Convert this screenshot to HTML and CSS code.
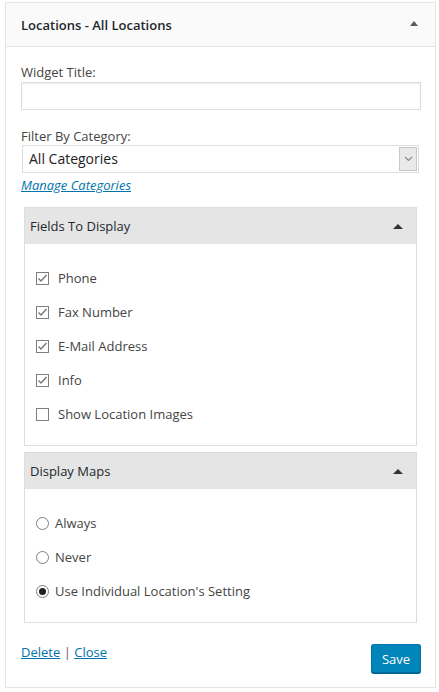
FILE: index.html
```html
<!DOCTYPE html>
<html>
<head>
<meta charset="utf-8">
<link rel="stylesheet" href="styles.css">
</head>
<body>
<div class="widget">
  <div class="widget-top">
    <h3 class="widget-title">Locations - All Locations</h3>
    <span class="tri tri-top"></span>
  </div>
  <div class="widget-inside">
    <label class="lbl">Widget Title:</label>
    <input class="text-input" type="text">
    <label class="lbl lbl-2">Filter By Category:</label>
    <div class="select">
      <span class="select-value">All Categories</span>
      <span class="select-arrow"><svg width="9" height="6" viewBox="0 0 9 6"><path d="M1 1 L4.5 4.5 L8 1" fill="none" stroke="#888" stroke-width="1.2"/></svg></span>
    </div>
    <a class="manage" href="#">Manage Categories</a>

    <div class="box">
      <div class="box-head"><span>Fields To Display</span><span class="tri"></span></div>
      <div class="box-body">
        <div class="row"><svg class="cb" width="13" height="13" viewBox="0 0 13 13"><rect x="0.5" y="0.5" width="12" height="12" fill="#fff" stroke="#7e7e7e"/><path d="M2.5 6.5 L5 9 L10.5 3" fill="none" stroke="#777" stroke-width="1.4"/></svg><span>Phone</span></div>
        <div class="row"><svg class="cb" width="13" height="13" viewBox="0 0 13 13"><rect x="0.5" y="0.5" width="12" height="12" fill="#fff" stroke="#7e7e7e"/><path d="M2.5 6.5 L5 9 L10.5 3" fill="none" stroke="#777" stroke-width="1.4"/></svg><span>Fax Number</span></div>
        <div class="row"><svg class="cb" width="13" height="13" viewBox="0 0 13 13"><rect x="0.5" y="0.5" width="12" height="12" fill="#fff" stroke="#7e7e7e"/><path d="M2.5 6.5 L5 9 L10.5 3" fill="none" stroke="#777" stroke-width="1.4"/></svg><span>E-Mail Address</span></div>
        <div class="row"><svg class="cb" width="13" height="13" viewBox="0 0 13 13"><rect x="0.5" y="0.5" width="12" height="12" fill="#fff" stroke="#7e7e7e"/><path d="M2.5 6.5 L5 9 L10.5 3" fill="none" stroke="#777" stroke-width="1.4"/></svg><span>Info</span></div>
        <div class="row"><svg class="cb" width="13" height="13" viewBox="0 0 13 13"><rect x="0.5" y="0.5" width="12" height="12" fill="#fff" stroke="#7e7e7e"/></svg><span>Show Location Images</span></div>
      </div>
    </div>

    <div class="box box-2">
      <div class="box-head"><span>Display Maps</span><span class="tri"></span></div>
      <div class="box-body">
        <div class="row radio-row"><svg class="rd" width="13" height="13" viewBox="0 0 13 13"><circle cx="6.5" cy="6.5" r="6" fill="#fff" stroke="#7e7e7e"/></svg><span>Always</span></div>
        <div class="row radio-row"><svg class="rd" width="13" height="13" viewBox="0 0 13 13"><circle cx="6.5" cy="6.5" r="6" fill="#fff" stroke="#7e7e7e"/></svg><span>Never</span></div>
        <div class="row radio-row"><svg class="rd" width="13" height="13" viewBox="0 0 13 13"><circle cx="6.5" cy="6.5" r="6" fill="#fff" stroke="#7e7e7e"/><circle cx="6.5" cy="6.5" r="3.5" fill="#222"/></svg><span>Use Individual Location's Setting</span></div>
      </div>
    </div>

    <div class="footer">
      <div class="links"><a href="#">Delete</a> <span class="sep">|</span> <a href="#">Close</a></div>
      <button class="save">Save</button>
    </div>
  </div>
</div>
</body>
</html>
```

FILE: styles.css
```css
html, body {
  margin: 0;
  padding: 0;
  background: #fff;
}
body {
  font-family: "Open Sans", "Liberation Sans", sans-serif;
  font-size: 13px;
  color: #444;
}
.widget {
  margin: 2px 3px 0 5px;
  width: 429px;
  border: 1px solid #e5e5e5;
  box-shadow: 0 1px 1px rgba(0,0,0,0.04);
}
.widget-top {
  height: 43px;
  background: #fafafa;
  border-bottom: 1px solid #e5e5e5;
  display: flex;
  align-items: center;
  justify-content: space-between;
  padding: 0 17px 0 15px;
}
.widget-title {
  margin: 0;
  font-size: 13px;
  font-weight: 600;
  color: #23282d;
}
.tri {
  width: 0;
  height: 0;
  border-left: 5px solid transparent;
  border-right: 5px solid transparent;
  border-bottom: 5px solid #333;
}
.tri-top {
  border-left-width: 4px;
  border-right-width: 4px;
  border-bottom-color: #555d66;
  margin-top: -2px;
}
.widget-inside {
  padding: 16px 14px 14px 15px;
  display: flex;
  flex-direction: column;
  align-items: flex-start;
}
.lbl {
  display: block;
  line-height: 18px;
  height: 18px;
}
.lbl-2 {
  margin-top: 17px;
}
.text-input {
  box-sizing: border-box;
  margin: 1px 0 0 0;
  width: 400px;
  height: 28px;
  border: 1px solid #ddd;
  box-shadow: inset 0 1px 2px rgba(0,0,0,0.07);
  padding: 0;
}
.select {
  box-sizing: border-box;
  margin: 0 0 0 1px;
  width: 397px;
  height: 28px;
  border: 1px solid #ddd;
  display: flex;
  align-items: stretch;
  background: #fff;
}
.select-value {
  flex: 1;
  padding-left: 6px;
  font-size: 14px;
  line-height: 26px;
  color: #222;
}
.select-arrow {
  width: 16px;
  margin: 1px;
  background: #e9e9e9;
  border: 1px solid #c8c8c8;
  display: flex;
  align-items: center;
  justify-content: center;
}
.manage {
  margin-top: 3px;
  line-height: 18px;
  font-style: italic;
  color: #0073aa;
}
.box {
  margin: 13px 0 0 3px;
  width: 393px;
  box-sizing: border-box;
  border: 1px solid #ddd;
}
.box-2 {
  margin-top: 6px;
}
.box-head {
  height: 36px;
  background: #e5e5e5;
  display: flex;
  align-items: center;
  justify-content: space-between;
  padding: 0 13px 0 5px;
  color: #23282d;
}
.box-body {
  padding: 17px 0 14px 11px;
}
.row {
  height: 34px;
  display: flex;
  align-items: center;
}
.cb {
  margin-right: 9px;
  flex: none;
}
.rd {
  margin-right: 6px;
  flex: none;
}
.footer {
  margin-top: 21px;
  width: 400px;
  display: flex;
  justify-content: space-between;
  align-items: flex-start;
}
.links {
  margin-top: -1px;
  line-height: 18px;
}
.links a {
  color: #0073aa;
}
.sep {
  color: #666;
}
.save {
  width: 50px;
  height: 29px;
  margin-right: 0;
  background: #0085ba;
  border: 1px solid #0073aa;
  border-bottom-color: #006799;
  border-radius: 3px;
  box-shadow: 0 1px 0 #006799;
  color: #fff;
  font-family: "Open Sans", "Liberation Sans", sans-serif;
  font-size: 13px;
  padding: 0;
}
```
